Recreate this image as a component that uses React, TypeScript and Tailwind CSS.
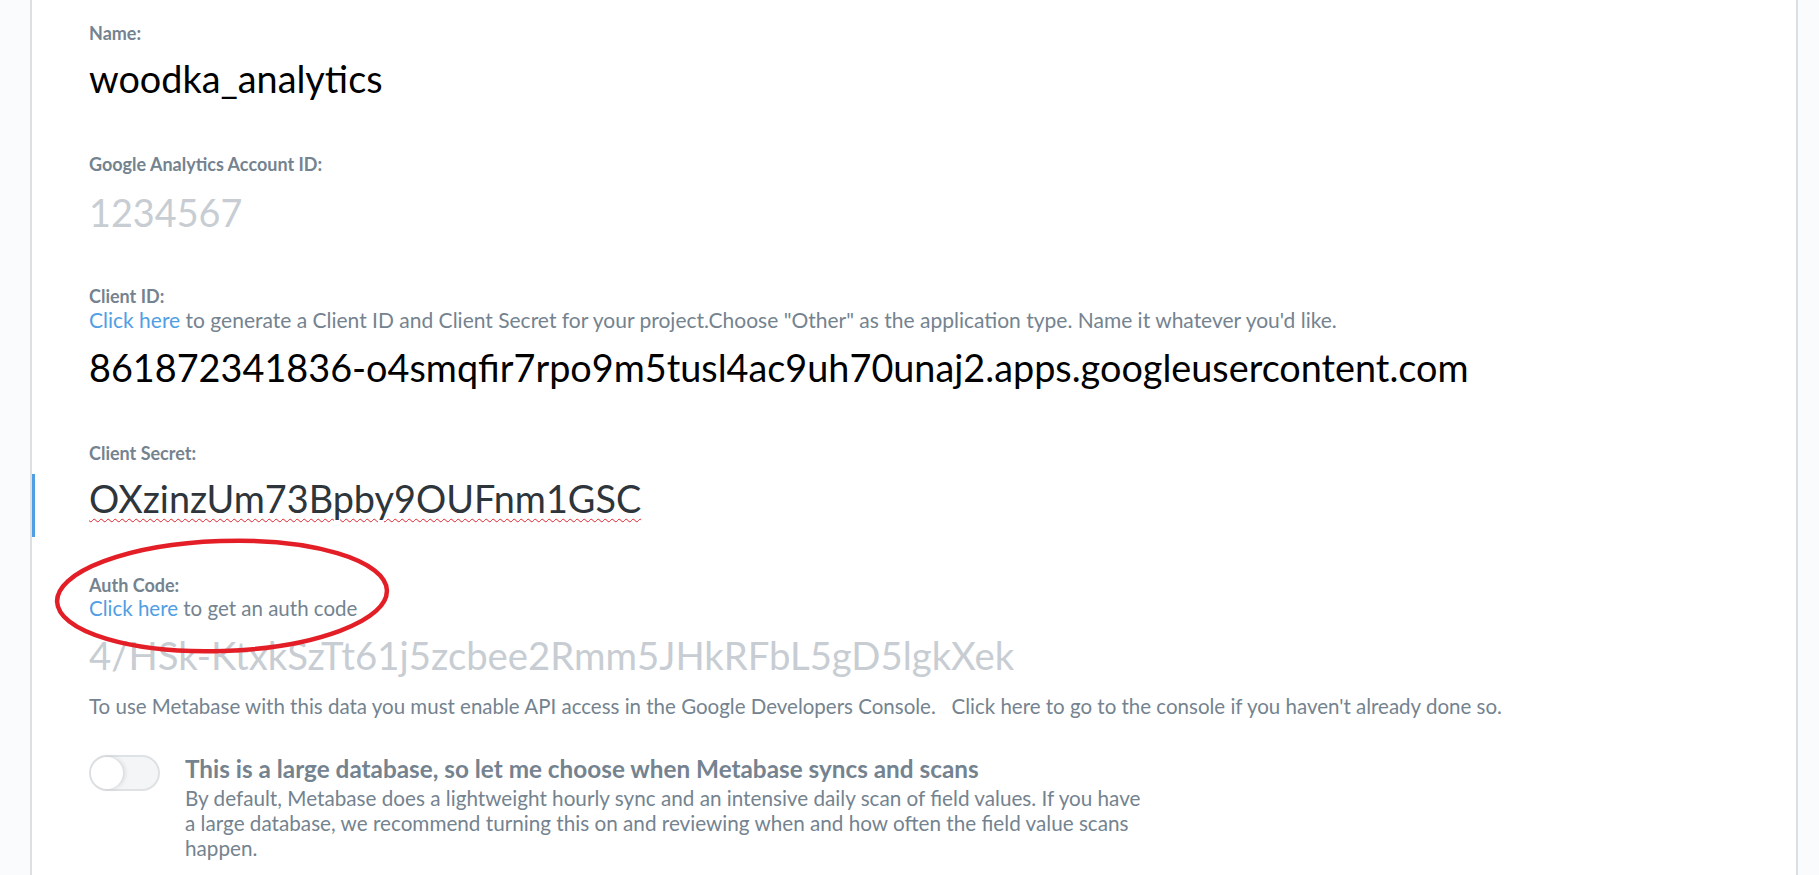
import React from "react";

const label = "block text-[18px] leading-[20px] font-bold text-[#74838f]";
const help = "text-[20.5px] leading-[24px] text-[#74838f]";
const value = "text-[37.8px] leading-[44px]";

const App = () => {
  return (
    <div className="min-h-screen w-full bg-[#fafbfc] font-['Lato',_'Noto_Sans',_sans-serif]">
      <div className="relative ml-[30px] w-[1768px] h-[875px] overflow-hidden border-x-2 border-[#dce0e3] bg-white">
        {/* Name */}
        <div className="pl-[57px] pt-[23px]">
          <span className={label}>Name:</span>
          <div className={`${value} mt-[14px] text-black`}>woodka_analytics</div>
        </div>

        {/* Google Analytics Account ID */}
        <div className="pl-[57px] mt-[53px]">
          <span className={label}>Google Analytics Account ID:</span>
          <div className={`${value} mt-[17px] text-[#c7cdd2]`}>1234567</div>
        </div>

        {/* Client ID */}
        <div className="pl-[57px] mt-[51px]">
          <span className={label}>Client ID:</span>
          <div className="mt-[2px] text-[21px] leading-[24px] text-[#74838f]">
            <span className="text-[#509ee3]">Click here</span> to generate a Client ID and Client Secret for your
            project.Choose "Other" as the application type. Name it whatever you'd like.
          </div>
          <div className={`${value} mt-[14px] text-black`}>
            861872341836-o4smqfir7rpo9m5tusl4ac9uh70unaj2.apps.googleusercontent.com
          </div>
        </div>

        {/* Client Secret */}
        <div className="mt-[53px]">
          <span className={`${label} pl-[57px]`}>Client Secret:</span>
          <div className="mt-[11px] h-[63px] border-l-[3px] border-[#509ee3] pl-[54px] pt-[3px]">
            <span
              className={`${value} text-[#2e353b] underline decoration-wavy decoration-[#e0242b] decoration-1 underline-offset-[5px]`}
            >
              OXzinzUm73Bpby9OUFnm1GSC
            </span>
          </div>
        </div>

        {/* Auth Code */}
        <div className="pl-[57px] mt-[38px]">
          <span className={label}>Auth Code:</span>
          <div className={`${help} mt-px`}>
            <span className="text-[#509ee3]">Click here</span> to get an auth code
          </div>
          <div className="mt-[13px] text-[38.3px] leading-[44px] text-[#c7cdd2]">
            4/HSk-KtxkSzTt61j5zcbee2Rmm5JHkRFbL5gD5lgkXek
          </div>
          <div className={`${help} mt-[17px]`}>
            To use Metabase with this data you must enable API access in the Google Developers Console.{"\u00a0\u00a0 "}Click
            here to go to the console if you haven't already done so.
          </div>
        </div>

        {/* Large database toggle */}
        <div className="pl-[57px] mt-[37px] flex items-start gap-[25px]">
          <div className="relative shrink-0 w-[71px] h-[36px] rounded-full border-2 border-[#dfe2e5] bg-[#f4f5f6]">
            <div className="absolute left-0 top-0 w-[32px] h-[32px] rounded-full bg-white shadow-[2px_0_4px_rgba(0,0,0,0.12)]" />
          </div>
          <div>
            <div className="text-[24.3px] leading-[28px] font-bold text-[#74838f]">
              This is a large database, so let me choose when Metabase syncs and scans
            </div>
            <div className="mt-[3px] w-[962px] text-[20.7px] leading-[25px] text-[#74838f]">
              By default, Metabase does a lightweight hourly sync and an intensive daily scan of field values. If you have
              a large database, we recommend turning this on and reviewing when and how often the field value scans
              happen.
            </div>
          </div>
        </div>

        {/* hand-drawn annotation */}
        <svg className="pointer-events-none absolute left-[17px] top-[535px]" width="350" height="122" viewBox="0 0 350 122">
          <ellipse
            cx="173"
            cy="61"
            rx="165"
            ry="55"
            fill="none"
            stroke="#e31e26"
            strokeWidth="4.5"
            transform="rotate(-2 173 61)"
          />
        </svg>
      </div>
    </div>
  );
};

export default App;
